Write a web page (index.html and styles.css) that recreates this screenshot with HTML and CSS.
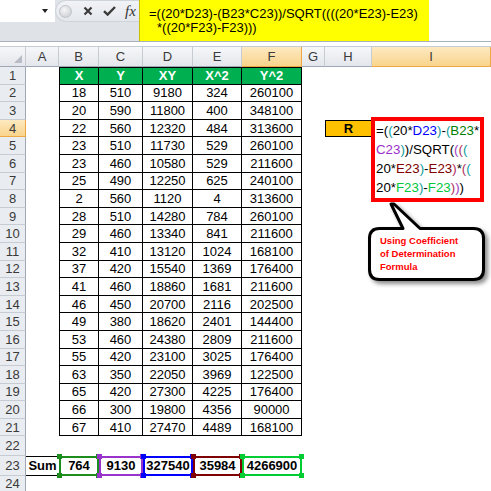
FILE: index.html
```html
<!DOCTYPE html>
<html lang="en">
  <head>
    <meta charset="UTF-8" />
    <title>Coefficient of Determination</title>
    <link rel="stylesheet" href="styles.css">
  </head>
  <body>
    <header class="formula-bar">
      <div class="fb-left">
        <div class="name-row">
          <div class="name-box"><span class="name-arrow"></span></div>
          <div class="fb-tools">
            <span class="knob"></span>
            <svg class="tool" width="10" height="10" viewBox="0 0 10 10" aria-label="Cancel">
              <path d="M1.5 1.5 L8.5 8.5 M8.5 1.5 L1.5 8.5" stroke="#3b3b3b" stroke-width="2.2" fill="none" />
            </svg>
            <svg class="tool" width="13" height="10" viewBox="0 0 13 10" aria-label="Enter">
              <path d="M1 5.2 L4.6 8.6 L12 1" stroke="#3b3b3b" stroke-width="2.4" fill="none" />
            </svg>
            <span class="fx">fx</span>
          </div>
        </div>
      </div>
      <div class="fb-input">
        <div>=((20*D23)-(B23*C23))/SQRT((((20*E23)-E23)</div>
        <div class="wrapped">*((20*F23)-F23)))</div>
      </div>
      <div class="fb-rest"></div>
    </header>
    <div class="strip"></div>

    <main class="sheet">
      <div class="row head">
        <div class="corner"></div>
        <div class="ch">A</div>
        <div class="ch">B</div>
        <div class="ch">C</div>
        <div class="ch">D</div>
        <div class="ch">E</div>
        <div class="ch sel">F</div>
        <div class="ch">G</div>
        <div class="ch">H</div>
        <div class="ch sel">I</div>
      </div>

      <div class="row">
        <div class="rh">1</div><div></div>
        <div class="d th first">X</div><div class="d th">Y</div><div class="d th">XY</div><div class="d th">X^2</div><div class="d th">Y^2</div>
      </div>
      <div class="row">
        <div class="rh">2</div><div></div>
        <div class="d first">18</div><div class="d">510</div><div class="d">9180</div><div class="d">324</div><div class="d">260100</div>
      </div>
      <div class="row">
        <div class="rh">3</div><div></div>
        <div class="d first">20</div><div class="d">590</div><div class="d">11800</div><div class="d">400</div><div class="d">348100</div>
      </div>
      <div class="row">
        <div class="rh sel">4</div><div></div>
        <div class="d first">22</div><div class="d">560</div><div class="d">12320</div><div class="d">484</div><div class="d">313600</div>
        <div></div>
        <div class="label">R</div>
        <div class="active">
          <div class="edit-box">
            =<span class="p1">(</span><span class="p2">(</span>20*<span class="ref-d">D23</span><span class="p2">)</span>-<span class="p2">(</span><span class="ref-b">B23</span>*<br>
            <span class="ref-c">C23</span><span class="p2">)</span><span class="p1">)</span>/SQRT<span class="p1">(</span><span class="p3">(</span><span class="p4">(</span><span class="p2">(</span><br>
            20*<span class="ref-e">E23</span><span class="p2">)</span>-<span class="ref-e">E23</span><span class="p4">)</span>*<span class="p4">(</span><span class="p2">(</span><br>
            20*<span class="ref-f">F23</span><span class="p2">)</span>-<span class="ref-f">F23</span><span class="p4">)</span><span class="p3">)</span><span class="p1">)</span>
          </div>
        </div>
      </div>
      <div class="row">
        <div class="rh">5</div><div></div>
        <div class="d first">23</div><div class="d">510</div><div class="d">11730</div><div class="d">529</div><div class="d">260100</div>
      </div>
      <div class="row">
        <div class="rh">6</div><div></div>
        <div class="d first">23</div><div class="d">460</div><div class="d">10580</div><div class="d">529</div><div class="d">211600</div>
      </div>
      <div class="row">
        <div class="rh">7</div><div></div>
        <div class="d first">25</div><div class="d">490</div><div class="d">12250</div><div class="d">625</div><div class="d">240100</div>
      </div>
      <div class="row">
        <div class="rh">8</div><div></div>
        <div class="d first">2</div><div class="d">560</div><div class="d">1120</div><div class="d">4</div><div class="d">313600</div>
      </div>
      <div class="row">
        <div class="rh">9</div><div></div>
        <div class="d first">28</div><div class="d">510</div><div class="d">14280</div><div class="d">784</div><div class="d">260100</div>
      </div>
      <div class="row">
        <div class="rh">10</div><div></div>
        <div class="d first">29</div><div class="d">460</div><div class="d">13340</div><div class="d">841</div><div class="d">211600</div>
      </div>
      <div class="row">
        <div class="rh">11</div><div></div>
        <div class="d first">32</div><div class="d">410</div><div class="d">13120</div><div class="d">1024</div><div class="d">168100</div>
      </div>
      <div class="row">
        <div class="rh">12</div><div></div>
        <div class="d first">37</div><div class="d">420</div><div class="d">15540</div><div class="d">1369</div><div class="d">176400</div>
      </div>
      <div class="row">
        <div class="rh">13</div><div></div>
        <div class="d first">41</div><div class="d">460</div><div class="d">18860</div><div class="d">1681</div><div class="d">211600</div>
      </div>
      <div class="row">
        <div class="rh">14</div><div></div>
        <div class="d first">46</div><div class="d">450</div><div class="d">20700</div><div class="d">2116</div><div class="d">202500</div>
      </div>
      <div class="row">
        <div class="rh">15</div><div></div>
        <div class="d first">49</div><div class="d">380</div><div class="d">18620</div><div class="d">2401</div><div class="d">144400</div>
      </div>
      <div class="row">
        <div class="rh">16</div><div></div>
        <div class="d first">53</div><div class="d">460</div><div class="d">24380</div><div class="d">2809</div><div class="d">211600</div>
      </div>
      <div class="row">
        <div class="rh">17</div><div></div>
        <div class="d first">55</div><div class="d">420</div><div class="d">23100</div><div class="d">3025</div><div class="d">176400</div>
      </div>
      <div class="row">
        <div class="rh">18</div><div></div>
        <div class="d first">63</div><div class="d">350</div><div class="d">22050</div><div class="d">3969</div><div class="d">122500</div>
      </div>
      <div class="row">
        <div class="rh">19</div><div></div>
        <div class="d first">65</div><div class="d">420</div><div class="d">27300</div><div class="d">4225</div><div class="d">176400</div>
      </div>
      <div class="row">
        <div class="rh">20</div><div></div>
        <div class="d first">66</div><div class="d">300</div><div class="d">19800</div><div class="d">4356</div><div class="d">90000</div>
      </div>
      <div class="row">
        <div class="rh">21</div><div></div>
        <div class="d first">67</div><div class="d">410</div><div class="d">27470</div><div class="d">4489</div><div class="d">168100</div>
      </div>
      <div class="row gap-row">
        <div class="rh">22</div>
      </div>
      <div class="row sum-row">
        <div class="rh">23</div>
        <div class="sum title">Sum</div>
        <div class="sum ref-box ref-b-box">764</div>
        <div class="sum ref-box ref-c-box">9130</div>
        <div class="sum ref-box ref-d-box">327540</div>
        <div class="sum ref-box ref-e-box">35984</div>
        <div class="sum ref-box ref-f-box">4266900</div>
      </div>
      <div class="row last-row">
        <div class="rh">24</div>
      </div>

      <!-- callout shape over the sheet -->
      <div class="callout">
        <svg width="131" height="90" viewBox="0 0 131 90">
          <path d="M19.5 28.5 H43 L31 4 L34 4 L60 28.5 H113.5 Q123.5 28.5 123.5 38.5 V69.5 Q123.5 79.5 113.5 79.5 H19.5 Q9.5 79.5 9.5 69.5 V38.5 Q9.5 28.5 19.5 28.5 Z"
            fill="#fff" stroke="#000" stroke-width="3" stroke-linejoin="round" />
        </svg>
        <div class="callout-text">Using Coefficient<br>of Determination<br>Formula</div>
      </div>
    </main>
  </body>
</html>
```

FILE: styles.css
```css
:root {
  --grid-cols: 26px 33px 40px 44px 50px 49px 60px 23px 47px 1fr;
  --hdr-line: #c7ccd3;
  --hdr-edge: #9ea7b3;
  --sel-bg: linear-gradient(#fde9c0, #f9d48c);
  --sel-line: #eda845;
}

* {
  margin: 0;
  padding: 0;
  box-sizing: border-box;
}

body {
  width: 491px;
  height: 491px;
  overflow: hidden;
  background: #fff;
  font-family: "Liberation Sans", Arial, sans-serif;
  font-size: 13px;
  color: #000;
}

/* formula bar */

.formula-bar {
  display: flex;
  height: 42px;
  border-bottom: 1px solid #a9b1bc;
}

.fb-left {
  width: 139px;
  background: #dfe3e8;
}

.name-row {
  display: flex;
  height: 22px;
}

.name-box {
  width: 55px;
  background: #fff;
  display: flex;
  align-items: center;
  justify-content: flex-end;
  padding-right: 7px;
}

.name-arrow {
  width: 0;
  height: 0;
  border-left: 3px solid transparent;
  border-right: 3px solid transparent;
  border-top: 4px solid #222;
}

.fb-tools {
  flex: 1;
  display: flex;
  align-items: center;
  gap: 10px;
  padding-left: 3px;
  background: linear-gradient(#f1f3f6, #e4e7ec);
  border-radius: 11px 0 0 11px;
  border: 1px solid #cfd4db;
  border-right: none;
}

.knob {
  width: 13px;
  height: 13px;
  border-radius: 50%;
  background: radial-gradient(circle at 40% 35%, #f6f6f6, #c5c8cd);
  border: 1px solid #c0c4ca;
  margin-right: 1px;
}

.tool {
  display: block;
}

.fx {
  font-family: "Liberation Serif", serif;
  font-style: italic;
  font-size: 15px;
  color: #333;
  margin-left: -1px;
}

.fb-input {
  width: 290px;
  background: #ffff00;
  border-left: 1px solid #c9bd00;
  padding: 7px 0 0 9px;
  line-height: 13.5px;
  font-size: 13px;
  white-space: nowrap;
}

.fb-input .wrapped {
  padding-left: 8px;
}

.fb-rest {
  flex: 1;
  background: #fff;
}

.strip {
  height: 5px;
  border-bottom: 1px solid #c6ccd4;
}

/* sheet */

.sheet {
  position: relative;
}

.row {
  display: grid;
  grid-template-columns: var(--grid-cols);
  height: 17.6px;
}

.row.head {
  height: 20px;
}

.row.gap-row {
  height: 19.4px;
}

.row.sum-row {
  height: 20px;
}

.row.last-row {
  height: 16px;
}

.corner,
.ch {
  background: linear-gradient(#f6f7f9, #e3e6eb);
  border-right: 1px solid var(--hdr-line);
  border-bottom: 1px solid var(--hdr-edge);
}

.corner {
  position: relative;
}

.corner::after {
  content: "";
  position: absolute;
  right: 3px;
  bottom: 3px;
  border-left: 8px solid transparent;
  border-bottom: 8px solid #b8bdc5;
}

.ch {
  display: flex;
  align-items: center;
  justify-content: center;
  color: #3a3a3a;
}

.ch.sel {
  background: var(--sel-bg);
  border-right-color: var(--sel-line);
  border-bottom-color: var(--sel-line);
}

.rh {
  background: #e9ecf0;
  border-right: 1px solid var(--hdr-edge);
  border-bottom: 1px solid var(--hdr-line);
  display: flex;
  align-items: center;
  justify-content: center;
  color: #3a3a3a;
}

.rh.sel {
  background: var(--sel-bg);
  border-bottom-color: var(--sel-line);
  border-right-color: var(--sel-line);
}

.d {
  border-right: 1px solid #000;
  border-bottom: 1px solid #000;
  display: flex;
  align-items: center;
  justify-content: center;
}

.d.first {
  border-left: 1px solid #000;
}

.d.th {
  background: #00b050;
  color: #fff;
  font-weight: bold;
  border-top: 1px solid #000;
}

.label {
  background: #ffc000;
  border: 1px solid #000;
  font-weight: bold;
  display: flex;
  align-items: center;
  justify-content: center;
}

.active {
  position: relative;
}

/* cell in edit mode, spills over the rows below */
.edit-box {
  position: absolute;
  top: -3px;
  left: -1px;
  width: 113px;
  height: 85px;
  border: 4px solid #ff0000;
  background: #fff;
  padding-left: 1px;
  font-size: 13.3px;
  line-height: 19px;
  white-space: nowrap;
  z-index: 2;
}

.ref-b { color: #007f00; }
.ref-c { color: #9b30c8; }
.ref-d { color: #0000ff; }
.ref-e { color: #800000; }
.ref-f { color: #00c83c; }
.p1 { color: #000; }
.p2 { color: #119c9c; }
.p3 { color: #a040c0; }
.p4 { color: #b03060; }

/* sum row with formula reference boxes */

.sum {
  border-top: 1px solid #000;
  border-bottom: 1px solid #000;
  font-weight: bold;
  display: flex;
  align-items: center;
  justify-content: center;
}

.ref-box {
  position: relative;
}

.ref-box::before {
  content: "";
  position: absolute;
  inset: -1px 0 -1px 0;
  border: 2px solid var(--ref);
}

.ref-box::after {
  content: "";
  position: absolute;
  inset: -3px -2px -3px -2px;
  background:
    linear-gradient(var(--ref), var(--ref)) left top / 5px 5px no-repeat,
    linear-gradient(var(--ref), var(--ref)) right top / 5px 5px no-repeat,
    linear-gradient(var(--ref), var(--ref)) left bottom / 5px 5px no-repeat,
    linear-gradient(var(--ref), var(--ref)) right bottom / 5px 5px no-repeat;
}

.ref-b-box { --ref: #1c8c1c; }
.ref-c-box { --ref: #9933cc; }
.ref-d-box { --ref: #0000ff; }
.ref-e-box { --ref: #7f0000; }
.ref-f-box { --ref: #00cc33; }

/* callout */

.callout {
  position: absolute;
  left: 360px;
  top: 153px;
  width: 131px;
  height: 90px;
  z-index: 3;
}

.callout svg {
  display: block;
  filter: drop-shadow(3px 3px 2px rgba(0, 0, 0, 0.45));
}

.callout-text {
  position: absolute;
  left: 20px;
  top: 34px;
  color: #ff0000;
  font-weight: bold;
  font-size: 9.5px;
  line-height: 13px;
  white-space: nowrap;
}
```
